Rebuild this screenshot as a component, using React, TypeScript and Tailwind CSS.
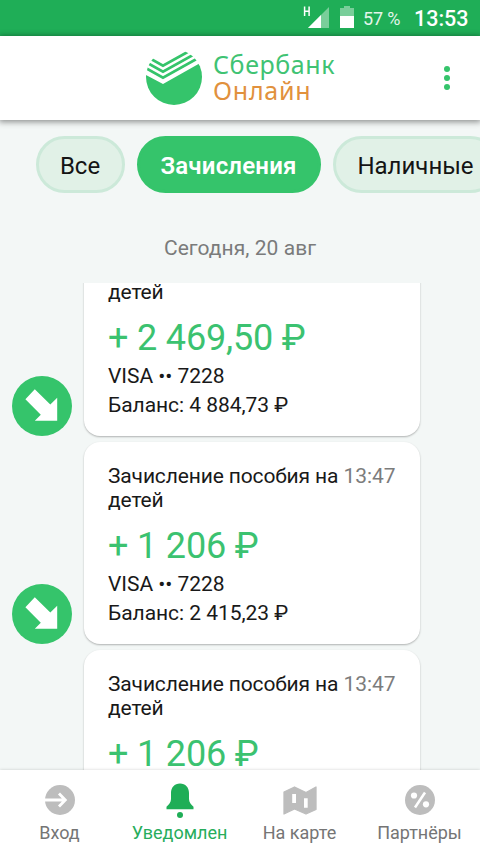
import { useState } from "react";
import clsx from "clsx";

type Operation = {
  id: number;
  title: string;
  time: string;
  amount: string;
  card: string;
  balance: string;
};

const operations: Operation[] = [
  {
    id: 1,
    title: "Зачисление пособия на детей",
    time: "13:47",
    amount: "+ 2 469,50 ₽",
    card: "VISA •• 7228",
    balance: "Баланс: 4 884,73 ₽",
  },
  {
    id: 2,
    title: "Зачисление пособия на детей",
    time: "13:47",
    amount: "+ 1 206 ₽",
    card: "VISA •• 7228",
    balance: "Баланс: 2 415,23 ₽",
  },
  {
    id: 3,
    title: "Зачисление пособия на детей",
    time: "13:47",
    amount: "+ 1 206 ₽",
    card: "VISA •• 7228",
    balance: "Баланс: 1 209,23 ₽",
  },
];

const filters = [
  { label: "Все", width: "w-[89px]" },
  { label: "Зачисления", width: "w-[184px]" },
  { label: "Наличные", width: "w-[166px]" },
];

function StatusBar() {
  return (
    <div className="flex h-9 shrink-0 items-center justify-end bg-[#1fae57] pr-3 text-white">
      <svg width="27" height="24" viewBox="0 0 27 24" className="mr-[10px] -mt-[3px]" aria-hidden>
        <path d="M1.6 1.5V11M6.1 1.5V11M1.6 6.2H6.1" stroke="#fff" strokeWidth="1.5" fill="none" />
        <path d="M26 2V23H5Z" fill="#79ce9a" />
        <path d="M18 10V23H5Z" fill="#fff" />
      </svg>
      <svg width="14" height="22" viewBox="0 0 14 22" className="mr-[9px] -mt-[2px]" aria-hidden>
        <path d="M4 0H10V2H14V11H0V2H4Z" fill="#79ce9a" />
        <path d="M0 10H14V22H0Z" fill="#fff" />
      </svg>
      <span className="mr-[14px] w-[37px] pt-[2px] text-lg leading-none tracking-[-0.15px] whitespace-nowrap text-[#e4f5eb]">57 %</span>
      <span className="w-[54px] pt-[2px] text-[21.5px] leading-none font-medium">13:53</span>
    </div>
  );
}

function Logo() {
  return (
    <div className="flex items-start">
      <svg width="56" height="56" viewBox="0 0 56 56" className="mt-[13px]" aria-hidden>
        <defs>
          <clipPath id="logo-disc">
            <circle cx="28" cy="28" r="28" />
          </clipPath>
        </defs>
        <g clipPath="url(#logo-disc)">
          <path d="M0 26L17 35L56 13V56H0Z" fill="#35c46b" />
          <g fill="none" stroke="#35c46b" strokeWidth="2.8">
            <path d="M0 19.2L17 28.7L56 7" />
            <path d="M0 13.2L17 22.7L56 1" />
            <path d="M0 7.2L17 16.7L56 -5" />
          </g>
        </g>
      </svg>
      <div className="ml-[11px] pt-[15px] font-['Noto_Sans',sans-serif] text-[25px] leading-[26px]">
        <div className="tracking-[0.6px] text-[#3fc373]">Сбербанк</div>
        <div className="tracking-[0.75px] text-[#e1913d]">Онлайн</div>
      </div>
    </div>
  );
}

function Header() {
  return (
    <header className="z-10 flex h-[84px] shrink-0 items-start justify-between bg-white pr-[30px] pl-[146px] shadow-[0_1px_6px_1px_rgba(0,0,0,0.42)]">
      <Logo />
      <button className="mt-[30px] flex flex-col gap-[3px]" aria-label="Меню">
        <span className="size-[6px] rounded-full bg-[#35c46b]" />
        <span className="size-[6px] rounded-full bg-[#35c46b]" />
        <span className="size-[6px] rounded-full bg-[#35c46b]" />
      </button>
    </header>
  );
}

function OperationRow({ operation }: { operation: Operation }) {
  return (
    <div className="flex h-[202px] items-end gap-3 pl-3">
      <svg width="60" height="60" viewBox="0 0 60 60" className="shrink-0" aria-hidden>
        <circle cx="30" cy="30" r="30" fill="#35c46b" />
        <path d="M22.8 13.2L38.3 28.5L45.2 21.7V44.7H22.8L28.8 38.7L13.4 23.2Z" fill="#fff" />
      </svg>
      <div className="h-full w-[336px] rounded-2xl bg-white px-6 pt-[22px] text-[21px] tracking-[-0.05px] text-[#191919] shadow-[0_1px_2px_rgba(0,0,0,0.28)]">
        <div className="flex justify-between leading-6">
          <span className="w-[234px] tracking-[-0.14px]">{operation.title}</span>
          <span className="pr-[0.5px] text-[#7c7c7c]">{operation.time}</span>
        </div>
        <div className="mt-[13px] text-4xl leading-[42px] tracking-[-0.17px] text-[#3bc270]">{operation.amount}</div>
        <div className="mt-[3px] leading-[29px]">{operation.card}</div>
        <div className="leading-[29px]">{operation.balance}</div>
      </div>
    </div>
  );
}

function LoginIcon() {
  return (
    <svg width="30" height="30" viewBox="0 0 30 30" aria-hidden>
      <circle cx="15" cy="15" r="15" fill="#bdbdbd" />
      <path d="M0 15H20M14 8.5L20.3 15L14 21.5" fill="none" stroke="#fff" strokeWidth="2.8" />
    </svg>
  );
}

function BellIcon() {
  return (
    <svg width="28" height="36" viewBox="0 0 28 36" className="mt-px" aria-hidden>
      <path d="M14 0.5C8.5 0.5 5 4.5 5 10V16C5 19.5 3 21.5 0.5 23.7V26.3H27.5V23.7C25 21.5 23 19.5 23 16V10C23 4.5 19.5 0.5 14 0.5Z" fill="#1fae57" />
      <circle cx="14" cy="32" r="3" fill="#1fae57" />
    </svg>
  );
}

function MapIcon() {
  return (
    <svg width="34" height="30" viewBox="0 0 34 30" aria-hidden>
      <path
        d="M1 7L11.5 2L23 7.5L33 2V24.5L23 29L11.5 24L1 29Z"
        fill="#bdbdbd"
        stroke="#bdbdbd"
        strokeWidth="1.3"
        strokeLinejoin="round"
      />
      <path d="M9.2 9H13V18H9.2ZM21 13.3H24.7V22.7H21Z" fill="#fff" />
    </svg>
  );
}

function PercentIcon() {
  return (
    <svg width="30" height="30" viewBox="0 0 30 30" aria-hidden>
      <circle cx="15" cy="15" r="15" fill="#bdbdbd" />
      <circle cx="9" cy="10.5" r="3.1" fill="#fff" />
      <circle cx="21" cy="19.3" r="3.1" fill="#fff" />
      <path d="M20 7.5L10 22.5" stroke="#fff" strokeWidth="2.5" />
    </svg>
  );
}

const tabs = [
  { label: "Вход", icon: <LoginIcon /> },
  { label: "Уведомлен", icon: <BellIcon /> },
  { label: "На карте", icon: <MapIcon /> },
  { label: "Партнёры", icon: <PercentIcon /> },
];

export default function App() {
  const [filter, setFilter] = useState("Зачисления");
  const [tab, setTab] = useState("Уведомлен");

  return (
    <div className="flex h-[854px] w-[480px] flex-col overflow-hidden bg-[#f3f7f6] font-[Roboto,sans-serif]">
      <StatusBar />
      <Header />

      <main className="flex min-h-0 flex-1 flex-col">
        <div className="flex gap-3 overflow-hidden pt-4 pl-9">
          {filters.map(({ label, width }) => (
            <button
              key={label}
              onClick={() => setFilter(label)}
              className={clsx(
                "h-[57px] shrink-0 rounded-full border-3 pt-[2px] pr-px text-2xl whitespace-nowrap",
                width,
                filter === label
                  ? "border-[#35c46b] bg-[#35c46b] font-semibold tracking-[0.2px] text-white"
                  : "border-[#cce9d9] bg-[#e1f1e7] text-[#141414]",
              )}
            >
              {label}
            </button>
          ))}
        </div>

        <div className="mt-[42px] h-12 shrink-0 text-center text-[21px] leading-[26px] tracking-[0.05px] text-[#7a7b7b]">
          Сегодня, 20 авг
        </div>

        <ul className="flex min-h-0 flex-1 flex-col gap-[6px] overflow-hidden">
          {operations.map((operation, i) => (
            <li key={operation.id} className={clsx("shrink-0", i === 0 && "-mt-[49px]")}>
              <OperationRow operation={operation} />
            </li>
          ))}
        </ul>
      </main>

      <nav className="z-10 grid h-[84px] shrink-0 grid-cols-4 bg-white shadow-[0_0_3px_rgba(0,0,0,0.18)]">
        {tabs.map(({ label, icon }) => (
          <button
            key={label}
            onClick={() => setTab(label)}
            className={clsx(
              "flex flex-col items-center text-lg leading-6",
              tab === label ? "text-[#27ad5c]" : "text-[#757575]",
            )}
          >
            <span className="flex h-[51px] items-center pt-[9px]">{icon}</span>
            <span className="pr-px">{label}</span>
          </button>
        ))}
      </nav>
    </div>
  );
}
